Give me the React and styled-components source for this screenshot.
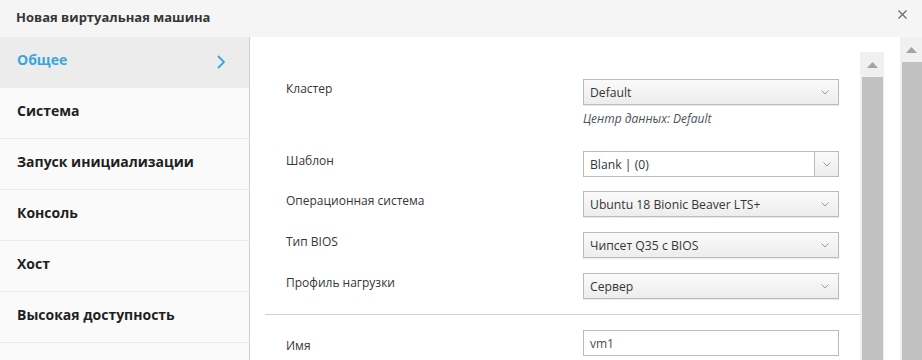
import React from 'react';
import styled, { createGlobalStyle } from 'styled-components';

const GlobalStyle = createGlobalStyle`
  html, body {
    margin: 0;
    padding: 0;
    background: #ffffff;
  }
  body {
    font-family: "Open Sans", "Liberation Sans", sans-serif;
    color: #363636;
  }
`;

const Dialog = styled.div`
  width: 922px;
  height: 360px;
  display: flex;
  flex-direction: column;
  overflow: hidden;
  background: #fff;
`;

const Header = styled.div`
  height: 37px;
  flex: none;
  display: flex;
  align-items: center;
  justify-content: space-between;
  padding: 0 13px 0 16px;
  background: #f5f5f5;
  box-sizing: border-box;
`;

const Title = styled.h4`
  margin: 0;
  font-size: 13px;
  font-weight: 700;
  color: #363636;
  margin-top: -4px;
`;

const Close = styled.button`
  border: 0;
  background: none;
  padding: 0;
  width: 14px;
  height: 14px;
  display: flex;
  align-items: center;
  justify-content: center;
  margin-top: -9px;
`;

const Body = styled.div`
  flex: 1;
  display: flex;
  min-height: 0;
`;

const Sidebar = styled.ul`
  width: 249px;
  flex: none;
  margin: 0;
  padding: 0;
  list-style: none;
  background: #fafafa;
  border-right: 1px solid #d1d1d1;
`;

const NavItem = styled.li`
  height: 50px;
  border-bottom: 1px solid #ececec;
  display: flex;
  align-items: center;
  justify-content: space-between;
  padding: 0 24px 0 17px;
  font-size: 14px;
  font-weight: 700;
  color: ${p => (p.$active ? '#39a5dc' : '#1f1f1f')};
  background: ${p => (p.$active ? '#ececec' : 'transparent')};
  box-sizing: content-box;

  span {
    margin-top: ${p => (p.$active ? '-5px' : '-5px')};
  }
`;

const Main = styled.div`
  flex: 1;
  display: flex;
  padding: 15px 16px 0 15px;
  min-width: 0;
`;

const Form = styled.div`
  flex: 1;
  padding-top: 27px;
`;

const Row = styled.div`
  display: grid;
  grid-template-columns: 297px 256px;
  padding-left: 21px;
  margin-bottom: ${p => p.$mb ?? 15}px;
`;

const Label = styled.label`
  font-size: 12px;
  line-height: 16px;
  padding-top: ${p => p.$pt ?? 2}px;
  color: #363636;
`;

const Select = styled.div`
  height: 26px;
  box-sizing: border-box;
  border: 1px solid #bbbbbb;
  background: linear-gradient(#fafafa, #ededed);
  box-shadow: 0 1px 1px rgba(3, 3, 3, 0.08);
  display: flex;
  align-items: center;
  justify-content: space-between;
  padding: 0 9px 0 6px;
  font-size: 12.2px;
  color: #363636;
`;

const Combo = styled.div`
  display: flex;
  height: 26px;
`;

const ComboInput = styled.div`
  flex: 1;
  box-sizing: border-box;
  border: 1px solid #bbbbbb;
  border-right: 0;
  background: #fff;
  display: flex;
  align-items: center;
  padding-left: 6px;
  font-size: 12.2px;
  color: #363636;
`;

const ComboButton = styled.div`
  width: 25px;
  box-sizing: border-box;
  border: 1px solid #bbbbbb;
  background: linear-gradient(#fafafa, #ededed);
  display: flex;
  align-items: center;
  justify-content: center;
`;

const TextInput = styled.div`
  height: 26px;
  box-sizing: border-box;
  border: 1px solid #bbbbbb;
  background: #fff;
  display: flex;
  align-items: center;
  padding-left: 6px;
  font-size: 12px;
  color: #4d4d4d;
`;

const Help = styled.div`
  font-size: 12px;
  line-height: 17px;
  font-style: italic;
  color: #4d5258;
  margin-top: 5px;
`;

const Divider = styled.hr`
  border: 0;
  border-top: 1px solid #d1d1d1;
  margin: 0 0 15px 0;
`;

const Scrollbar = styled.div`
  width: ${p => p.$w}px;
  flex: none;
  background: #f0f0f0;
  display: flex;
  flex-direction: column;
  align-items: flex-end;
`;

const ScrollArrow = styled.div`
  height: ${p => p.$h}px;
  width: 100%;
  display: flex;
  align-items: center;
  justify-content: center;
`;

const Thumb = styled.div`
  flex: 1;
  width: ${p => p.$w}px;
  margin-right: ${p => p.$mr}px;
  background: #c1c1c1;
`;

const Caret = () => (
  <svg width="8" height="5" viewBox="0 0 8 5">
    <path d="M0.5 0.5 L4 4 L7.5 0.5" fill="none" stroke="#9a9a9a" strokeWidth="1" />
  </svg>
);

const UpTriangle = () => (
  <svg width="11" height="6" viewBox="0 0 11 6">
    <path d="M0 6 L5.5 0 L11 6 Z" fill="#a3a3a3" />
  </svg>
);

const nav = [
  'Общее',
  'Система',
  'Запуск инициализации',
  'Консоль',
  'Хост',
  'Высокая доступность',
];

export default function App() {
  return (
    <Dialog>
      <GlobalStyle />
      <Header>
        <Title>Новая виртуальная машина</Title>
        <Close aria-label="Закрыть">
          <svg width="9" height="9" viewBox="0 0 9 9">
            <path d="M0.5 0.5 L8.5 8.5 M8.5 0.5 L0.5 8.5" stroke="#6a6e73" strokeWidth="1.3" />
          </svg>
        </Close>
      </Header>
      <Body>
        <Sidebar>
          {nav.map((n, i) => (
            <NavItem key={n} $active={i === 0}>
              <span>{n}</span>
              {i === 0 && (
                <svg width="8" height="14" viewBox="0 0 8 14">
                  <path d="M1 1 L7 7 L1 13" fill="none" stroke="#39a5dc" strokeWidth="1.8" />
                </svg>
              )}
            </NavItem>
          ))}
        </Sidebar>
        <Main>
          <Form>
            <Row $mb={24}>
              <Label>Кластер</Label>
              <div>
                <Select>Default<Caret /></Select>
                <Help>Центр данных: Default</Help>
              </div>
            </Row>
            <Row $mb={14}>
              <Label>Шаблон</Label>
              <Combo>
                <ComboInput>Blank | (0)</ComboInput>
                <ComboButton><Caret /></ComboButton>
              </Combo>
            </Row>
            <Row>
              <Label>Операционная система</Label>
              <Select>Ubuntu 18 Bionic Beaver LTS+<Caret /></Select>
            </Row>
            <Row>
              <Label>Тип BIOS</Label>
              <Select>Чипсет Q35 с BIOS<Caret /></Select>
            </Row>
            <Row>
              <Label>Профиль нагрузки</Label>
              <Select>Сервер<Caret /></Select>
            </Row>
            <Divider />
            <Row>
              <Label $pt={8}>Имя</Label>
              <TextInput>vm1</TextInput>
            </Row>
          </Form>
          <Scrollbar $w={24}>
            <ScrollArrow $h={25}><UpTriangle /></ScrollArrow>
            <Thumb $w={21} $mr={1} />
          </Scrollbar>
        </Main>
        <Scrollbar $w={22}>
          <ScrollArrow $h={25}><UpTriangle /></ScrollArrow>
          <Thumb $w={20} $mr={0} />
        </Scrollbar>
      </Body>
    </Dialog>
  );
}
